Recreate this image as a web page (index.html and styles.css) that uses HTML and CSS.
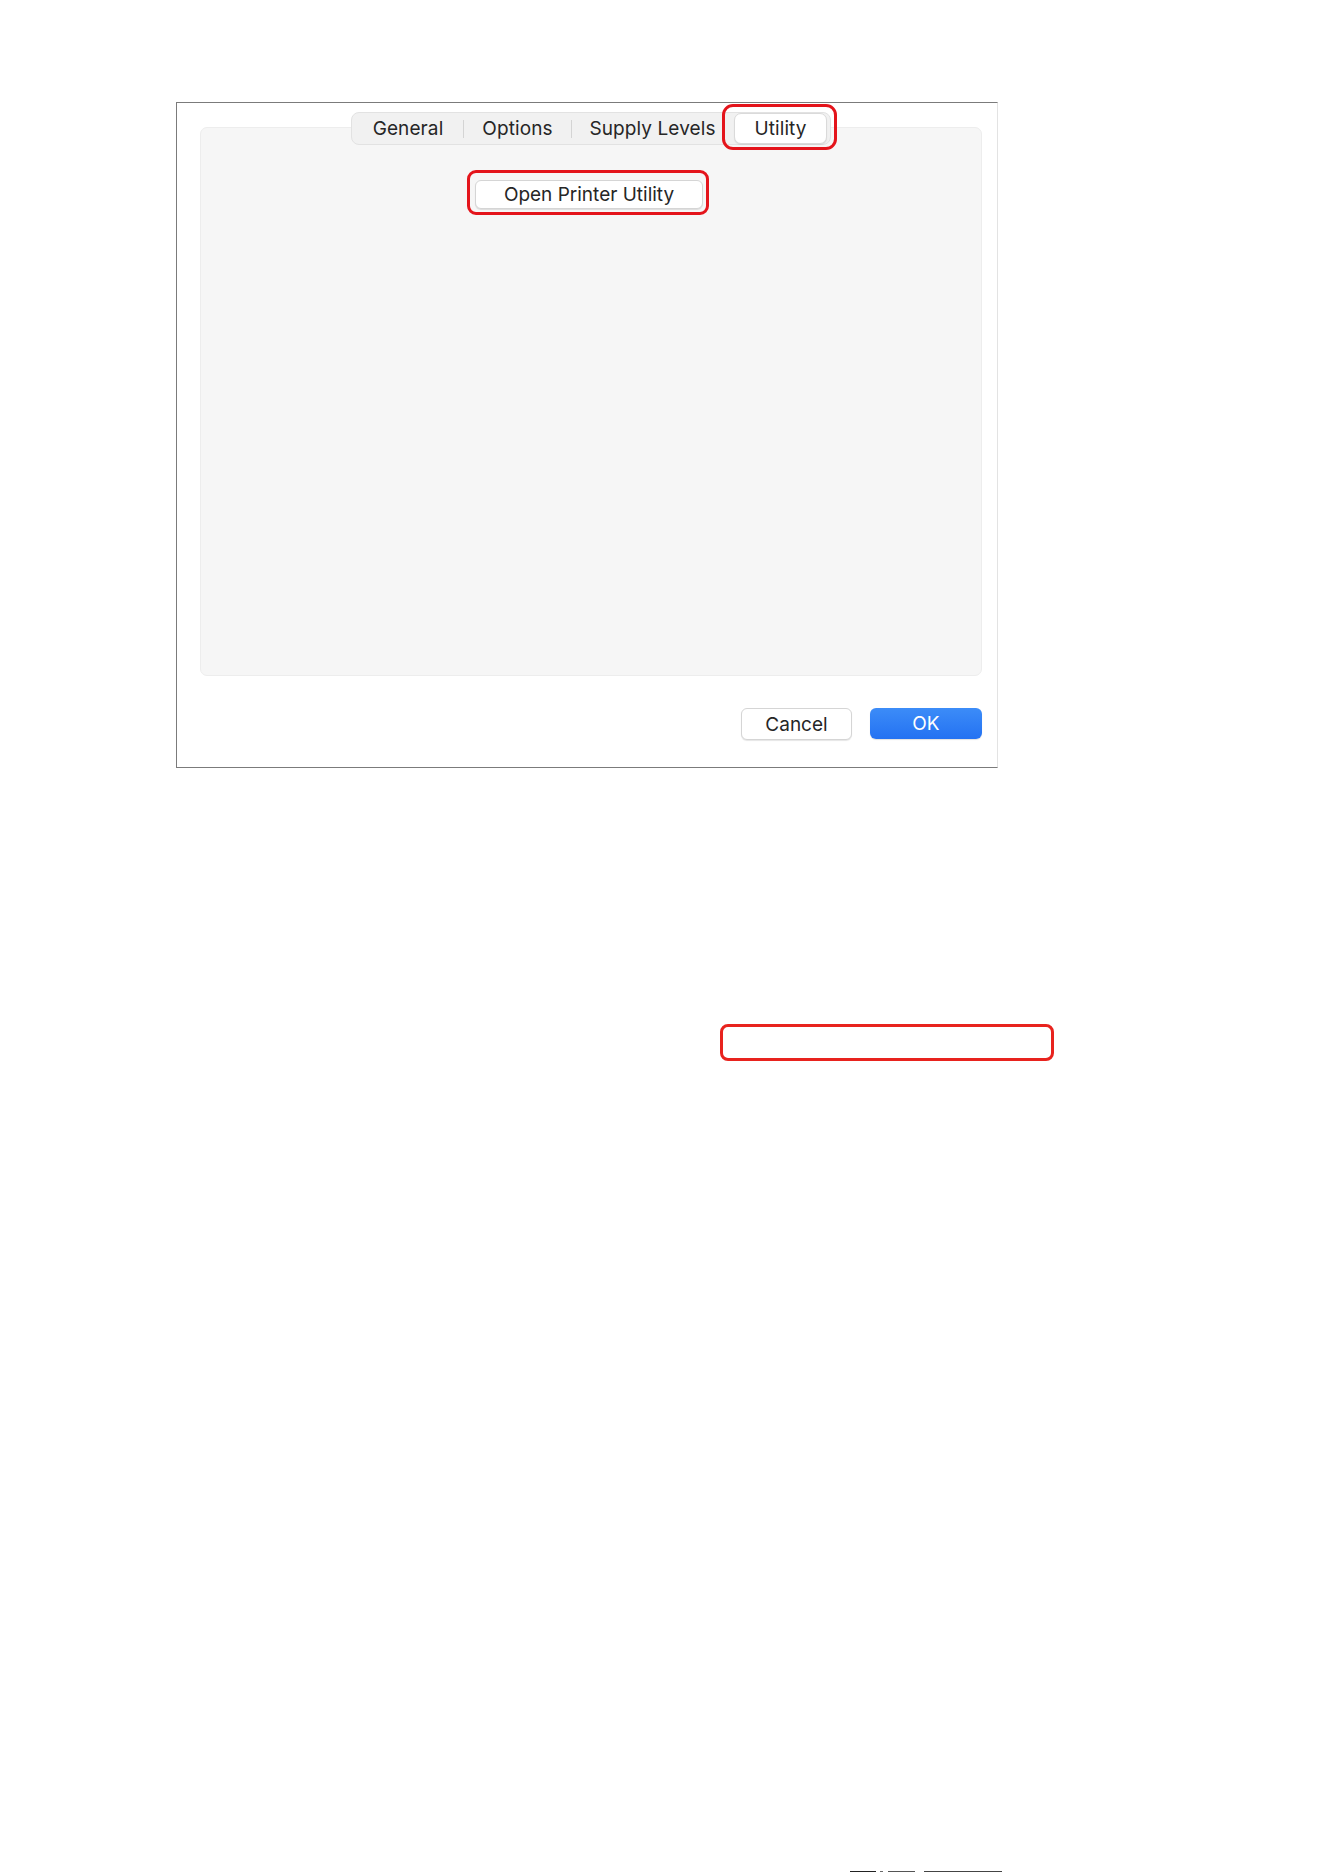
FILE: index.html
```
<!DOCTYPE html>
<html lang="en">
<head>
<meta charset="utf-8">
<title>Utility</title>
<link rel="stylesheet" href="styles.css">
</head>
<body>
<div class="page">
  <div class="dialog">
    <div class="tabbar">
      <div class="tab tab-general">General</div>
      <div class="sep"></div>
      <div class="tab tab-options">Options</div>
      <div class="sep"></div>
      <div class="tab tab-supply">Supply Levels</div>
      <div class="tab tab-utility highlight hl-tab">Utility</div>
    </div>
    <div class="panel">
      <button class="btn btn-open highlight hl-open">Open Printer Utility</button>
    </div>
    <div class="actions">
      <button class="btn btn-cancel">Cancel</button>
      <button class="btn btn-ok">OK</button>
    </div>
  </div>
  <div class="callout"></div>
  <div class="scanline">
    <span class="dash d1"></span>
    <span class="dash d2"></span>
    <span class="dash d3"></span>
    <span class="dash d4"></span>
  </div>
</div>
</body>
</html>
```
FILE: styles.css
```
html, body {
  margin: 0;
  padding: 0;
  background: #ffffff;
}

.page {
  width: 1324px;
  height: 1872px;
  display: flex;
  flex-direction: column;
  font-family: "Inter", "Liberation Sans", Arial, sans-serif;
  color: #262626;
  overflow: hidden;
}

.dialog {
  margin-top: 102px;
  margin-left: 176px;
  width: 822px;
  height: 666px;
  box-sizing: border-box;
  border-top: 1px solid #7b7b7b;
  border-left: 1px solid #7b7b7b;
  border-bottom: 1px solid #7b7b7b;
  border-right: 1px solid #e3e3e3;
  padding: 9px 15px 0 23px;
  display: flex;
  flex-direction: column;
  background: #ffffff;
}

.tabbar {
  align-self: center;
  margin-left: 0;
  position: relative;
  z-index: 1;
  display: flex;
  align-items: center;
  height: 33px;
  box-sizing: border-box;
  padding: 0 3px 0 1px;
  background: #f1f1f1;
  border: 1px solid #e2e2e2;
  border-radius: 8px;
  font-size: 19px;
  letter-spacing: 0.1px;
}

.tab {
  height: 100%;
  display: flex;
  align-items: center;
  justify-content: center;
  box-sizing: border-box;
  padding-bottom: 1px;
}

.tab-general { width: 110px; }
.tab-options { width: 107px; }
.tab-supply { width: 161px; }
.tab-utility {
  width: 93px;
  height: 31px;
  margin-left: 1px;
  background: #ffffff;
  border: 1px solid #dadada;
  border-radius: 7px;
  box-shadow: 0 1px 1px rgba(0,0,0,0.08);
}

.sep {
  width: 1px;
  height: 18px;
  background: #d4d4d4;
}

.panel {
  margin-top: -18px;
  width: 782px;
  height: 549px;
  box-sizing: border-box;
  background: #f6f6f6;
  border: 1px solid #ededed;
  border-radius: 7px;
  display: flex;
  flex-direction: column;
  align-items: center;
  padding-top: 52px;
}

.btn {
  font-family: "Inter", "Liberation Sans", Arial, sans-serif;
  font-size: 19px;
  color: #262626;
  background: #ffffff;
  border: 1px solid #d5d5d5;
  border-radius: 6px;
  box-shadow: 0 1px 1px rgba(0,0,0,0.10);
  padding: 0;
  box-sizing: border-box;
  display: flex;
  align-items: center;
  justify-content: center;
}

.btn-open {
  width: 228px;
  height: 29px;
  margin-left: -4px;
}

.actions {
  width: 782px;
  display: flex;
  justify-content: flex-end;
  gap: 18px;
  margin-top: 32px;
}

.btn-cancel {
  width: 111px;
  height: 32px;
}

.btn-ok {
  width: 112px;
  height: 31px;
  color: #ffffff;
  border: none;
  background: linear-gradient(#3c8cf8, #2472f2);
  box-shadow: 0 1px 1px rgba(0,0,0,0.12);
}

.highlight {
  position: relative;
}

.highlight::after {
  content: "";
  position: absolute;
  border: 3px solid #e4141b;
  pointer-events: none;
}

.hl-tab::after {
  top: -10px;
  bottom: -7px;
  left: -13px;
  right: -11px;
  border-radius: 11px;
}

.hl-open::after {
  top: -11px;
  bottom: -7px;
  left: -9px;
  right: -7px;
  border-radius: 9px;
}

.callout {
  margin-top: 256px;
  margin-left: 720px;
  width: 334px;
  height: 37px;
  box-sizing: border-box;
  border: 3px solid #e8231e;
  border-radius: 8px;
}

.scanline {
  margin-top: auto;
  height: 1px;
  display: flex;
  margin-left: 850px;
}

.dash {
  height: 1px;
  background: #222;
}
.d1 { width: 26px; }
.d2 { width: 3px; margin-left: 4px; background: #6a6a6a; }
.d3 { width: 27px; margin-left: 5px; background: #555; }
.d4 { width: 78px; margin-left: 9px; background: #444; }
```
